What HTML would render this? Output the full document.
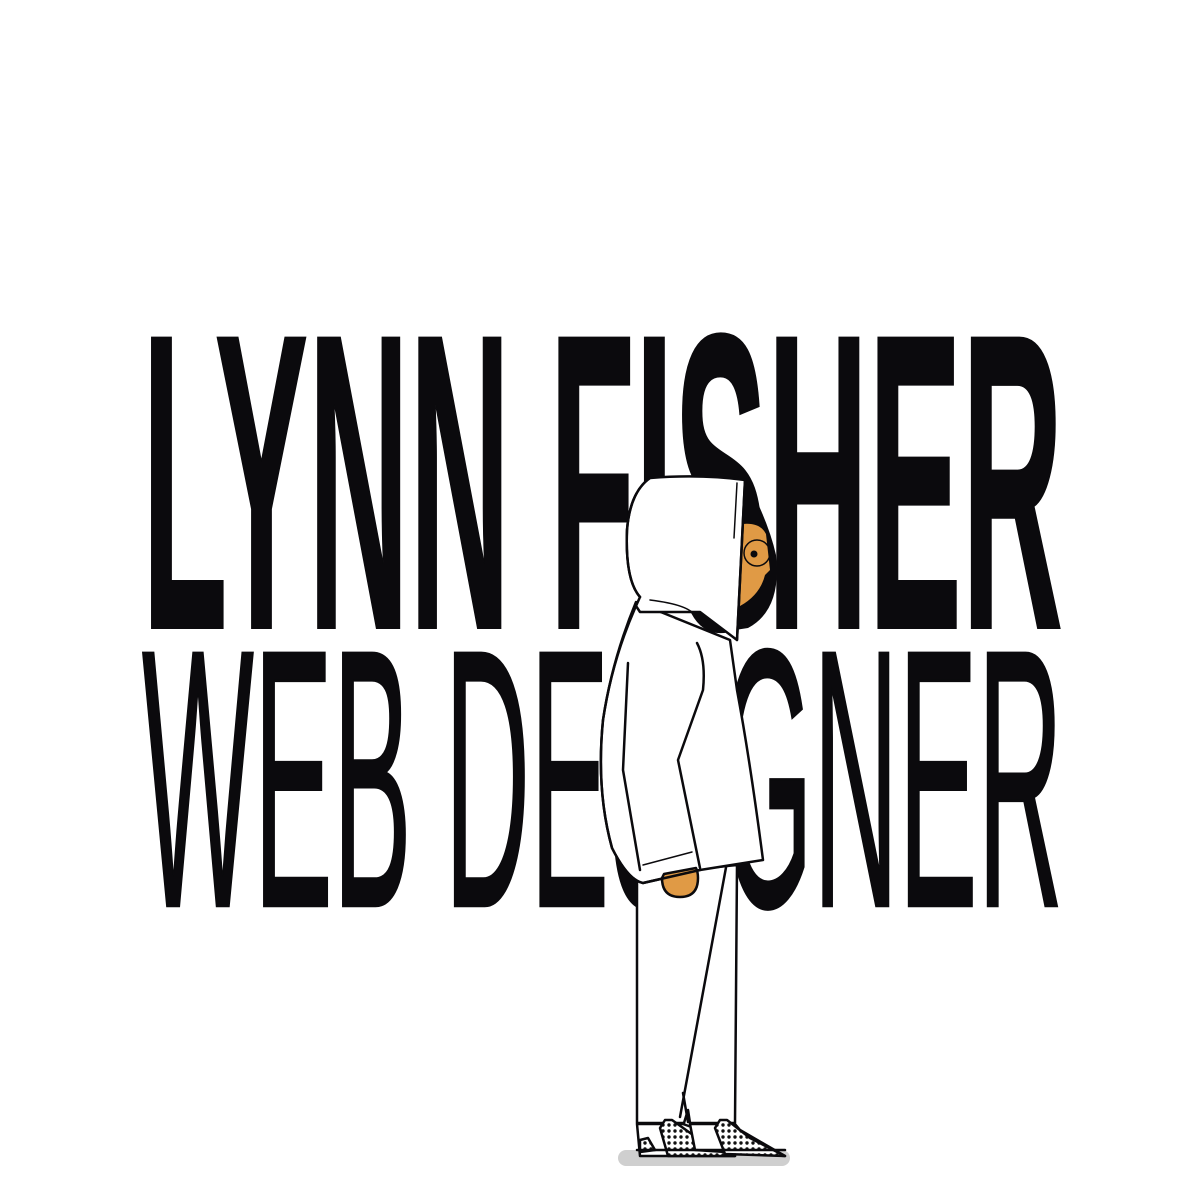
<!DOCTYPE html>
<html><head><meta charset="utf-8"><style>
html,body{margin:0;padding:0;background:#fff;width:1200px;height:1200px;overflow:hidden}
svg{display:block}
</style></head><body>
<svg width="1200" height="1200" viewBox="0 0 1200 1200" xmlns="http://www.w3.org/2000/svg">
<rect width="1200" height="1200" fill="#fff"/>
<g fill="#0b0a0d" font-family="Liberation Sans, sans-serif">
<text x="142" y="628" font-size="422" font-weight="bold" textLength="921" lengthAdjust="spacingAndGlyphs" stroke="#0b0a0d" stroke-width="2">LYNN FISHER</text>
<text x="142" y="906" font-size="368" textLength="921" lengthAdjust="spacingAndGlyphs" stroke="#0b0a0d" stroke-width="2.5">WEB DESIGNER</text>
</g>
<rect x="618" y="1150" width="172" height="16" rx="8" fill="#cfcfcf"/>
<defs>
<pattern id="dots" width="6" height="6" patternUnits="userSpaceOnUse">
<rect width="6" height="6" fill="#fff"/><circle cx="3" cy="3" r="1.7" fill="#111"/>
</pattern>
</defs>
<g stroke="#0b0a0d" stroke-width="2.5" stroke-linejoin="round" stroke-linecap="round">
<path d="M712 470 L745 478 Q768 520 776 555 Q782 610 748 628 L735 630 Z" fill="#0b0a0d" stroke="none"/>
<path d="M742 524 Q760 522 766 534 L770 570 L765 575 Q760 595 740 606 Z" fill="#e09a45" stroke="none"/>
<circle cx="757" cy="553" r="13" fill="none" stroke-width="1.5"/>
<circle cx="754" cy="554" r="3.5" fill="#0b0a0d" stroke="none"/>
<path d="M637 875 L637 1123 L684 1123 L688 1110 L690 1123 L735 1123 L737 865 Z" fill="#fff"/>
<path d="M727 862 L680 1117" fill="none"/>
<path d="M683 1093 L688 1122" fill="none"/>
<path d="M637 1124 L640 1156 L735 1156 L700 1130 L683 1124 Z" fill="#fff"/>
<path d="M660 1128 L665 1120 L672 1120 L700 1140 L735 1156 L668 1156 Z" fill="url(#dots)"/>
<path d="M640 1140 L648 1138 L655 1150 L640 1152 Z" fill="url(#dots)"/>
<path d="M690 1124 L695 1150 L785 1156 L740 1130 L735 1124 Z" fill="#fff"/>
<path d="M715 1128 L720 1120 L727 1120 L750 1138 L785 1156 L725 1154 Z" fill="url(#dots)"/>
<path d="M637 1150 L785 1150" fill="none"/>
<path d="M636 602 Q612 660 603 720 Q596 790 612 848 Q628 880 643 883 L700 870 L763 860 Q750 760 737 690 L730 640 Z" fill="#fff"/>
<path d="M650 478 Q630 492 627 530 Q625 580 640 597 L636 606 L640 612 L700 612 L737 640 L745 480 Q700 474 650 478 Z" fill="#fff"/>
<path d="M650 478 Q630 492 627 530 Q625 580 640 597" fill="none"/>
<path d="M745 480 L737 640" fill="none"/>
<path d="M737 483 L734 538" fill="none" stroke-width="1.5"/>
<path d="M650 600 Q690 605 695 616" fill="none" stroke-width="1.5"/>
<path d="M697 643 Q706 660 703 690 L678 760 L700 868" fill="none"/>
<path d="M628 663 L623 770 L640 870" fill="none"/>
<path d="M643 865 L692 852" fill="none" stroke-width="1.5"/>
<path d="M662 878 Q662 897 680 897 Q698 897 698 878 Q698 872 696 868 L664 874 Z" fill="#e09a45"/>
<path d="M636 606 Q612 660 603 720 Q596 790 612 848 Q628 880 643 883 L700 870" fill="none"/>
</g>
</svg>
</body></html>
